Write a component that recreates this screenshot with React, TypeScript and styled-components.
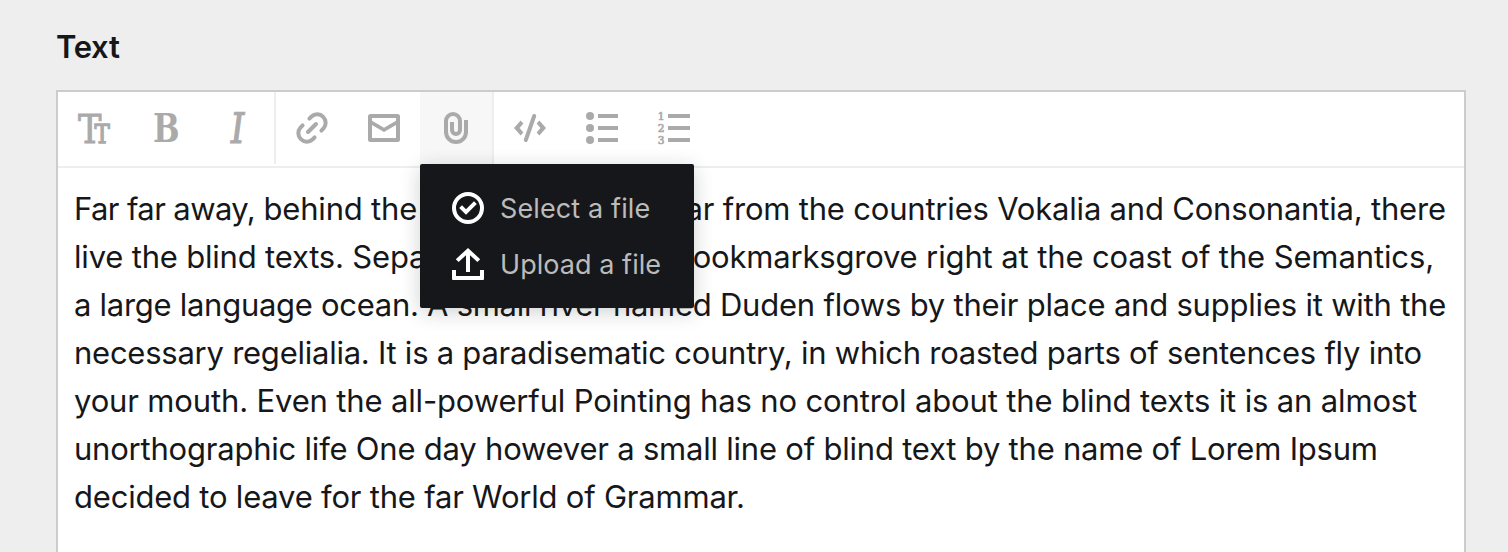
import React from "react";
import styled, { createGlobalStyle } from "styled-components";

const GlobalStyle = createGlobalStyle`
  *, *::before, *::after { box-sizing: border-box; }
  body {
    margin: 0;
    background: #eeeeee;
    color: #16171a;
    font-family: Inter, "Liberation Sans", sans-serif;
  }
`;

const Page = styled.main`
  height: 552px;
  padding: 0 42px 0 56px;
  overflow: hidden;
`;

const Label = styled.h2`
  margin: 0;
  height: 90px;
  font-size: 31px;
  font-weight: 600;
  line-height: 94px;
  letter-spacing: -0.3px;
`;

const Field = styled.section`
  height: 500px;
  border: 2px solid #cccccc;
  background: #ffffff;
`;

const Toolbar = styled.nav`
  display: flex;
  align-items: flex-start;
  height: 76px;
  border-bottom: 2px solid #eeeeee;
`;

const Group = styled.div<{ $divided?: boolean }>`
  display: flex;
  height: 72px;
  border-right: ${(p) => (p.$divided ? "2px solid #eeeeee" : "0")};
`;

const ToolButton = styled.button<{ $active?: boolean }>`
  display: flex;
  align-items: center;
  justify-content: center;
  width: 72px;
  height: 72px;
  padding: 0;
  border: 0;
  color: #aaaaaa;
  background: ${(p) => (p.$active ? "#f7f7f7" : "transparent")};
`;

const Anchor = styled.div`
  position: relative;
`;

const Menu = styled.div`
  position: absolute;
  top: 72px;
  left: 0;
  z-index: 1;
  width: 274px;
  padding: 16px 0;
  border-radius: 2px;
  background: #16171a;
  box-shadow: 0 4px 20px rgba(22, 23, 26, 0.2);
`;

const MenuItem = styled.div`
  display: flex;
  align-items: center;
  gap: 16px;
  height: 56px;
  padding: 0 32px;
  color: #ffffff;
`;

const MenuText = styled.span<{ $tracking: number }>`
  padding-top: 2px;
  color: #bbbbbb;
  font-size: 27px;
  line-height: 40px;
  white-space: nowrap;
  letter-spacing: ${(p) => p.$tracking}px;
`;

const Content = styled.p`
  margin: 0;
  padding: 17px 16px 16px;
  font-size: 31px;
  line-height: 48px;
`;

const Line = styled.span`
  display: block;
  white-space: nowrap;
`;

const Run = styled.span<{ $tracking: number }>`
  letter-spacing: ${(p) => p.$tracking}px;
`;

const Icon = styled.svg.attrs({ viewBox: "0 0 32 32", fill: "currentColor" })`
  display: block;
  flex: none;
  width: 32px;
  height: 32px;
  overflow: visible;
`;

const SlabText = styled.text<{ $size: number; $bold?: boolean; $italic?: boolean }>`
  font-family: "DejaVu Serif", serif;
  font-size: ${(p) => p.$size}px;
  font-weight: ${(p) => (p.$bold ? 700 : 400)};
  font-style: ${(p) => (p.$italic ? "italic" : "normal")};
`;

const TitleIcon = () => (
  <Icon>
    <SlabText $size={40} stroke="currentColor" strokeWidth="0.9" transform="translate(0 31.4) scale(0.88 1)">T</SlabText>
    <SlabText $size={26} stroke="currentColor" strokeWidth="1.3" transform="translate(16.4 31.3) scale(0.88 1)">
      T
    </SlabText>
  </Icon>
);

const BoldIcon = () => (
  <Icon>
    <SlabText $size={38.4} $bold transform="translate(3 30) scale(0.82 1)">B</SlabText>
  </Icon>
);

const ItalicIcon = () => (
  <Icon>
    <SlabText $size={42} $italic stroke="currentColor" strokeWidth="1.1" transform="translate(8.9 31.4) skewX(2) scale(0.86 1)">
      I
    </SlabText>
  </Icon>
);

const LinkIcon = () => (
  <Icon>
    <g fill="none" stroke="currentColor" strokeWidth="4" strokeLinecap="round">
      <path d="M13.4 6.6 15.5 4.5A8.5 8.5 0 0 1 27.5 16.5L25.4 18.6" />
      <path d="M18.6 25.4 16.5 27.5A8.5 8.5 0 0 1 4.5 15.5L6.6 13.4" />
      <path d="M12 20 20 12" />
    </g>
  </Icon>
);

const MailIcon = () => (
  <Icon>
    <rect x="2" y="4" width="28" height="24" rx="0.5" fill="none" stroke="currentColor" strokeWidth="4" strokeLinejoin="round" />
    <path d="M4 8.7 16 15.7 28 8.7V13L16 20 4 13Z" />
  </Icon>
);

const ClipIcon = () => (
  <Icon>
    <path
      d="M26 8V20A10 10 0 0 1 6 20V9A7 7 0 0 1 20 9V18A4 4 0 0 1 12 18V10"
      fill="none"
      stroke="currentColor"
      strokeWidth="4"
    />
  </Icon>
);

const CodeIcon = () => (
  <Icon>
    <path d="M0 16 6.6 8.6 9.4 11.4 5.6 16 9.4 20.6 6.6 23.4Z" />
    <path d="M32 16 25.4 8.6 22.6 11.4 26.4 16 22.6 20.6 25.4 23.4Z" />
    <path d="M20.2 4 11.8 28" stroke="currentColor" strokeWidth="4" strokeLinecap="round" />
  </Icon>
);

const rows = [4, 16, 28];

const BulletIcon = () => (
  <Icon>
    {rows.map((y) => (
      <g key={y}>
        <circle cx="4" cy={y} r="4" />
        <rect x="12" y={y - 2} width="20" height="4" />
      </g>
    ))}
  </Icon>
);

const NumberIcon = () => (
  <Icon>
    {rows.map((y, i) => (
      <g key={y}>
        <SlabText $size={11.2} stroke="currentColor" strokeWidth="0.7" transform={`translate(-0.2 ${y + 4}) scale(0.95 1)`}>
          {i + 1}
        </SlabText>
        <rect x="10" y={y - 2} width="22" height="4" />
      </g>
    ))}
  </Icon>
);

const CheckIcon = () => (
  <Icon>
    <circle cx="16" cy="16" r="14" fill="none" stroke="currentColor" strokeWidth="4" />
    <path d="M14 22.8 7.2 16 10 13.2 14 17.2 22 9.2 24.8 12Z" />
  </Icon>
);

const UploadIcon = () => (
  <Icon>
    <path d="M16 0 3.8 11.2 6.6 14 14 7.2V24H18V7.2L25.4 14 28.2 11.2Z" />
    <path d="M0 22H4V28H28V22H32V31A1 1 0 0 1 31 32H1A1 1 0 0 1 0 31Z" />
  </Icon>
);

const lines: [string, number][][] = [
  [
    ["Far far away,", -0.6],
    [" behind the word mountains, far from the countries Vokalia and Consonantia, there", -0.195],
  ],
  [
    ["live the blind texts. Separated they live in Bookmarksgrove", -0.19],
    [" right at the coast of the Semantics,", -0.12],
  ],
  [
    ["a large language ocean. A small river named", -0.28],
    [" Duden flows by their place and supplies it with the", -0.21],
  ],
  [["necessary regelialia. It is a paradisematic country, in which roasted parts of sentences fly into", -0.247]],
  [["your mouth. Even the all-powerful Pointing has no control about the blind texts it is an almost", -0.152]],
  [["unorthographic life One day however a small line of blind text by the name of Lorem Ipsum", -0.215]],
  [["decided to leave for the far World of Grammar.", -0.21]],
];

export default function App() {
  return (
    <Page>
      <GlobalStyle />
      <Label>Text</Label>
      <Field>
        <Toolbar>
          <Group $divided>
            <ToolButton aria-label="Headings"><TitleIcon /></ToolButton>
            <ToolButton aria-label="Bold"><BoldIcon /></ToolButton>
            <ToolButton aria-label="Italic"><ItalicIcon /></ToolButton>
          </Group>
          <Group $divided>
            <ToolButton aria-label="Link"><LinkIcon /></ToolButton>
            <ToolButton aria-label="Email"><MailIcon /></ToolButton>
            <Anchor>
              <ToolButton $active aria-label="File"><ClipIcon /></ToolButton>
              <Menu>
                <MenuItem>
                  <CheckIcon />
                  <MenuText $tracking={0.12}>Select a file</MenuText>
                </MenuItem>
                <MenuItem>
                  <UploadIcon />
                  <MenuText $tracking={0.05}>Upload a file</MenuText>
                </MenuItem>
              </Menu>
            </Anchor>
          </Group>
          <Group>
            <ToolButton aria-label="Code"><CodeIcon /></ToolButton>
            <ToolButton aria-label="Bullet list"><BulletIcon /></ToolButton>
            <ToolButton aria-label="Ordered list"><NumberIcon /></ToolButton>
          </Group>
        </Toolbar>
        <Content>
          {lines.map((runs, i) => (
            <Line key={i}>
              {runs.map(([text, tracking]) => (
                <Run key={text} $tracking={tracking}>{text}</Run>
              ))}
            </Line>
          ))}
        </Content>
      </Field>
    </Page>
  );
}
